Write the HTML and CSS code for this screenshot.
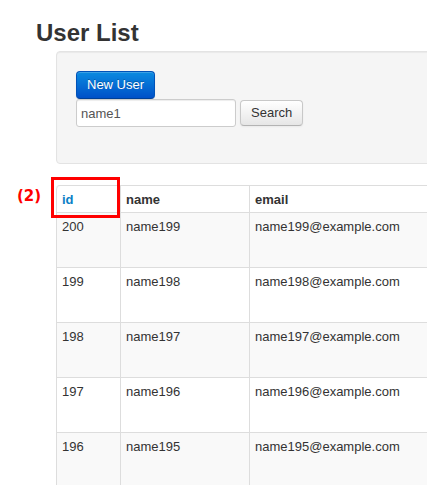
FILE: index.html
```html
<!DOCTYPE html>
<html>
<head>
<meta charset="utf-8">
<link rel="stylesheet" href="styles.css">
</head>
<body>
<div class="page">
  <h1 class="title">User List</h1>
  <div class="well">
    <button class="btn btn-primary">New User</button>
    <form class="search">
      <input class="search-input" type="text" value="name1">
      <button class="btn" type="button">Search</button>
    </form>
  </div>
  <div class="table-wrap">
    <table class="table">
      <thead>
        <tr><th class="col-id"><a href="#">id</a></th><th class="col-name">name</th><th class="col-email">email</th></tr>
      </thead>
      <tbody>
        <tr><td>200</td><td>name199</td><td>name199@example.com</td></tr>
        <tr><td>199</td><td>name198</td><td>name198@example.com</td></tr>
        <tr><td>198</td><td>name197</td><td>name197@example.com</td></tr>
        <tr><td>197</td><td>name196</td><td>name196@example.com</td></tr>
        <tr><td>196</td><td>name195</td><td>name195@example.com</td></tr>
      </tbody>
    </table>
    <div class="mark-box"></div>
    <div class="mark-label">(2)</div>
  </div>
</div>
</body>
</html>
```
FILE: styles.css
```css
html, body {
  margin: 0;
  padding: 0;
  overflow: hidden;
  background: #fff;
}
body {
  font-family: "Liberation Sans", Arial, sans-serif;
  font-size: 13px;
  color: #333;
}
.page {
  width: 700px;
  padding-top: 18px;
  padding-left: 35px;
}
.title {
  margin: 0 0 0 1px;
  font-size: 24px;
  line-height: 29px;
  font-weight: bold;
  color: #333;
}
.well {
  margin: 4px 0 21px 21px;
  padding: 19px 19px 36px 19px;
  background: #f5f5f5;
  border: 1px solid #e3e3e3;
  border-radius: 4px;
  box-shadow: inset 0 1px 1px rgba(0,0,0,0.05);
}
.btn {
  display: inline-block;
  box-sizing: border-box;
  height: 26px;
  padding: 0 10px;
  font-family: "Liberation Sans", Arial, sans-serif;
  font-size: 13px;
  line-height: 24px;
  color: #333;
  background: linear-gradient(#ffffff, #e6e6e6);
  border: 1px solid #c8c8c8;
  border-bottom-color: #b3b3b3;
  border-radius: 4px;
  box-shadow: inset 0 1px 0 rgba(255,255,255,0.2), 0 1px 2px rgba(0,0,0,0.05);
  margin: 0;
}
.btn-primary {
  display: block;
  height: 28px;
  line-height: 26px;
  color: #fff;
  background: linear-gradient(#0a8be0, #0050c8);
  border: 1px solid #0052b8;
  border-bottom-color: #003f96;
  text-shadow: 0 -1px 0 rgba(0,0,0,0.25);
}
.search {
  display: flex;
  align-items: center;
  gap: 4px;
  margin: 0;
}
.search-input {
  box-sizing: border-box;
  width: 160px;
  height: 28px;
  margin: 0;
  padding: 0 4px;
  font-family: "Liberation Sans", Arial, sans-serif;
  font-size: 13px;
  color: #555;
  background: #fff;
  border: 1px solid #ccc;
  border-radius: 3px;
  box-shadow: inset 0 1px 1px rgba(0,0,0,0.075);
}
.table-wrap {
  position: relative;
  margin-left: 21px;
}
.table {
  border-collapse: separate;
  border-spacing: 0;
  border: 1px solid #ddd;
  border-left: 0;
  border-radius: 4px 0 0 0;
  width: 500px;
}
.table th, .table td {
  text-align: left;
  vertical-align: top;
  line-height: 18px;
  border-left: 1px solid #ddd;
  border-top: 1px solid #ddd;
  padding: 5px 5px 31px 5px;
}
.table th {
  border-top: 0;
  padding: 5px 5px 3px 5px;
  font-weight: bold;
  background: #fff;
}
.table th.col-id {
  border-top-left-radius: 4px;
}
.col-id { width: 53px; }
.col-name { width: 118px; }
.table th a {
  color: #0a7fc6;
  text-decoration: none;
}
.table tbody tr:nth-child(odd) td {
  background: #f9f9f9;
}
.mark-box {
  position: absolute;
  left: -5px;
  top: -8px;
  width: 69px;
  height: 41px;
  box-sizing: border-box;
  border: 3px solid #ff0000;
}
.mark-label {
  position: absolute;
  left: -39px;
  top: 2px;
  font-family: "DejaVu Sans", sans-serif;
  font-weight: bold;
  font-size: 15px;
  color: #ff0000;
}
```
